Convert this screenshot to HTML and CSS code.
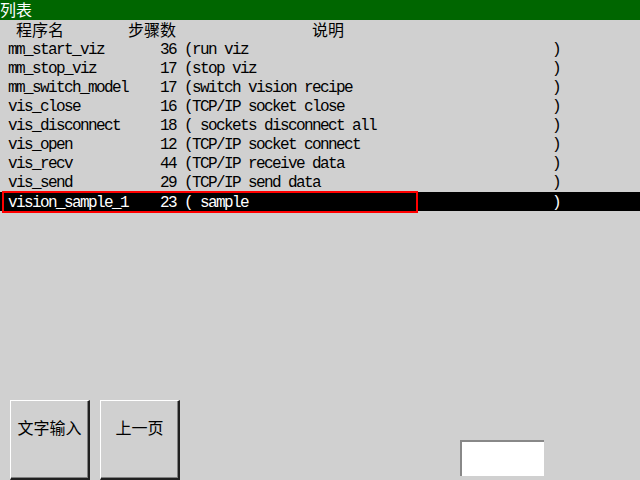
FILE: index.html
```html
<!DOCTYPE html>
<html lang="zh-CN">
  <head>
    <meta charset="utf-8">
    <title>列表</title>
    <link rel="stylesheet" href="styles.css">
  </head>
  <body>
    <div class="screen">
      <div class="titlebar">列表</div>
      <div class="list">
        <div class="row row--head">
          <span class="row__name">程序名</span>
          <span class="row__steps">步骤数</span>
          <span class="row__desc">说明</span>
        </div>
        <div class="row">
          <span class="row__name">mm_start_viz</span>
          <span class="row__steps">36</span>
          <span class="row__desc"><span>(run viz</span><span>)</span></span>
        </div>
        <div class="row">
          <span class="row__name">mm_stop_viz</span>
          <span class="row__steps">17</span>
          <span class="row__desc"><span>(stop viz</span><span>)</span></span>
        </div>
        <div class="row">
          <span class="row__name">mm_switch_model</span>
          <span class="row__steps">17</span>
          <span class="row__desc"><span>(switch vision recipe</span><span>)</span></span>
        </div>
        <div class="row">
          <span class="row__name">vis_close</span>
          <span class="row__steps">16</span>
          <span class="row__desc"><span>(TCP/IP socket close</span><span>)</span></span>
        </div>
        <div class="row">
          <span class="row__name">vis_disconnect</span>
          <span class="row__steps">18</span>
          <span class="row__desc"><span>( sockets disconnect all</span><span>)</span></span>
        </div>
        <div class="row">
          <span class="row__name">vis_open</span>
          <span class="row__steps">12</span>
          <span class="row__desc"><span>(TCP/IP socket connect</span><span>)</span></span>
        </div>
        <div class="row">
          <span class="row__name">vis_recv</span>
          <span class="row__steps">44</span>
          <span class="row__desc"><span>(TCP/IP receive data</span><span>)</span></span>
        </div>
        <div class="row">
          <span class="row__name">vis_send</span>
          <span class="row__steps">29</span>
          <span class="row__desc"><span>(TCP/IP send data</span><span>)</span></span>
        </div>
        <div class="row row--selected">
          <span class="row__name">vision_sample_1</span>
          <span class="row__steps">23</span>
          <span class="row__desc"><span>( sample</span><span>)</span></span>
        </div>
      </div>
      <div class="footer">
        <button class="key">文字输入</button>
        <button class="key">上一页</button>
        <div class="field"></div>
      </div>
    </div>
  </body>
</html>
```

FILE: styles.css
```css
*, *::after, *::before {
  margin: 0;
  padding: 0;
  box-sizing: border-box;
}
body {
  width: 640px;
  height: 480px;
  overflow: hidden;
  background-color: #d0d0d0;
}
.screen {
  display: flex;
  flex-direction: column;
  width: 640px;
  height: 480px;
  font-family: "Noto Sans CJK SC", sans-serif;
  color: #000;
}
.titlebar {
  height: 20px;
  line-height: 19px;
  font-size: 16px;
  color: #fff;
  background-color: #006600;
}
.list {
  flex: 1;
}
.row {
  display: grid;
  grid-template-columns: 120px 48px 384px;
  height: 19px;
  padding-top: 3px;
  padding-left: 8px;
  line-height: 16px;
  font-family: "Liberation Mono", "Noto Sans CJK SC", monospace;
  font-size: 16px;
  letter-spacing: -1.6px;
  white-space: pre;
}
.row__steps {
  text-align: right;
}
.row__desc {
  display: flex;
  justify-content: space-between;
  margin-left: 8px;
}
.row--head {
  padding-top: 1px;
  line-height: 17px;
  font-family: "Noto Sans CJK SC", sans-serif;
  letter-spacing: 0;
}
.row--head .row__name {
  padding-left: 8px;
}
.row--head .row__desc {
  padding-left: 128px;
}
.row--selected {
  position: relative;
  color: #fff;
  background-color: #000;
  margin-top: 1px;
}
.row--selected::before {
  content: '';
  position: absolute;
  top: -1px;
  left: 2px;
  width: 416px;
  height: 22px;
  border: 2px solid #ff0000;
}
.footer {
  display: flex;
  gap: 10px;
  height: 80px;
  padding-left: 10px;
}
.key {
  width: 80px;
  height: 80px;
  padding-top: 14px;
  display: flex;
  justify-content: center;
  align-items: flex-start;
  font-family: "Noto Sans CJK SC", sans-serif;
  font-size: 16px;
  color: #000;
  background-color: #d0d0d0;
  border-top: 1px solid #fff;
  border-left: 1px solid #fff;
  border-right: 2px solid #202020;
  border-bottom: 2px solid #202020;
  box-shadow: inset -1px -1px 0 #808080;
}
.field {
  align-self: flex-end;
  width: 84px;
  height: 36px;
  margin-left: auto;
  margin-right: 96px;
  margin-bottom: 4px;
  background-color: #fff;
  border-top: 2px solid #888;
  border-left: 2px solid #888;
}
```
